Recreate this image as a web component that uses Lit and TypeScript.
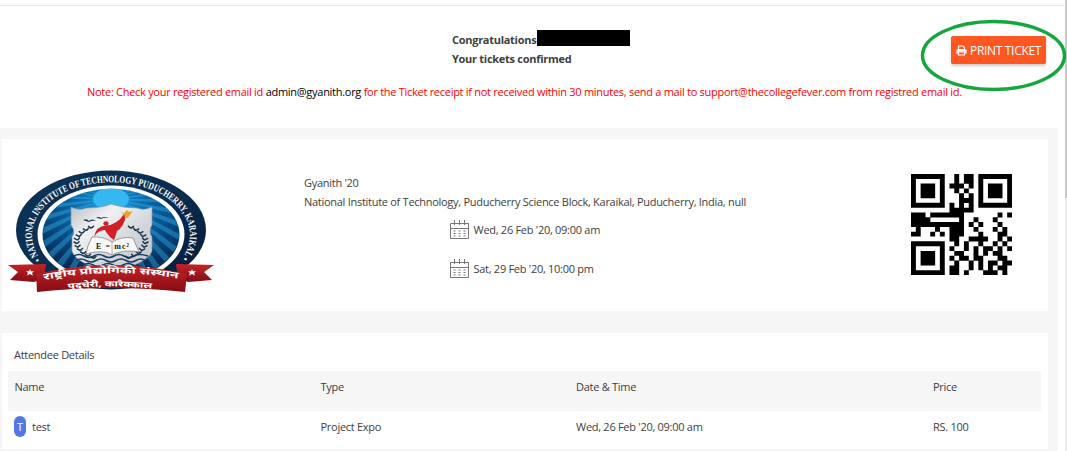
import { LitElement, html, svg, css } from "lit";
import { customElement } from "lit/decorators.js";

const QR_ROWS = [
  "111111100101101111111",
  "100000100101101000001",
  "101110101110101011101",
  "101110100101001011101",
  "101110100010101011101",
  "100000100011101000001",
  "111111101010101111111",
  "000000001111100000000",
  "111011111110000000101",
  "111100000010010001000",
  "111111111110101000100",
  "010001001110010001010",
  "110010101110001000110",
  "000000001100111100101",
  "111111100101001001010",
  "100000101001010110101",
  "101110100110010101100",
  "101110101011011000110",
  "101110100100101011011",
  "100000101100101010110",
  "111111101101000111010",
];

@customElement("emblem-logo")
class EmblemLogo extends LitElement {
  static styles = css`
    :host { display: block; }
    svg { display: block; }
    .ring { font: bold 10px "Liberation Serif", serif; fill: #fff; letter-spacing: 0; }
    .hindi { font: bold 9px "Noto Sans Devanagari", "Lohit Devanagari", "Noto Sans", sans-serif; fill: #fff; letter-spacing: 0; }
    .small { font-size: 8px; }
    .formula { font: bold 8px "Liberation Serif", serif; fill: #111; letter-spacing: 0; }
  `;
  render() {
    const rays = Array.from({ length: 40 }, (_, i) => {
      const a = (i * Math.PI) / 20;
      const b = a + 0.075;
      return `M103 29L${103 + 120 * Math.cos(a)} ${29 + 120 * Math.sin(a)}L${103 + 120 * Math.cos(b)} ${29 + 120 * Math.sin(b)}Z`;
    }).join("");
    const leaves = Array.from({ length: 11 }, (_, i) => {
      const t = 2.1 + i * 0.2;
      const x = 103 + 34 * Math.cos(t);
      const y = 73 + 18 * Math.sin(t);
      const m = 206 - x;
      return svg`<path d="M${x} ${y}l-3.5 -2M${x} ${y}l2.5 -2.6M${m} ${y}l3.5 -2M${m} ${y}l-2.5 -2.6"/>`;
    });
    return html`<svg width="208" height="124" viewBox="0 0 208 124">
      <defs>
        <radialGradient id="sky" cx=".5" cy=".2" r=".7">
          <stop offset="0" stop-color="#20a4e8" /><stop offset=".4" stop-color="#0866a4" /><stop offset="1" stop-color="#032c58" />
        </radialGradient>
        <linearGradient id="navy" x1="0" y1="0" x2="1" y2="1">
          <stop offset="0" stop-color="#0c3557" /><stop offset=".5" stop-color="#092d50" /><stop offset="1" stop-color="#061a38" />
        </linearGradient>
        <linearGradient id="red" x1="0" y1="0" x2="0" y2="1">
          <stop offset="0" stop-color="#c42427" /><stop offset="1" stop-color="#850c13" />
        </linearGradient>
        <linearGradient id="silver" x1="0" y1="0" x2="1" y2="1">
          <stop offset="0" stop-color="#b9bdc2" /><stop offset=".3" stop-color="#f0f1f3" /><stop offset=".6" stop-color="#d4d6da" /><stop offset="1" stop-color="#c2c5ca" />
        </linearGradient>
        <clipPath id="disc"><ellipse cx="103" cy="64" rx="68" ry="45.5" /></clipPath>
        <path id="arc" d="M34 91A79 53 0 1 1 172 91" />
        <path id="wave1" d="M36 110Q103 97 173 109" />
        <path id="wave2" d="M60 119Q103 114 146 119" />
      </defs>
      <ellipse cx="103" cy="60" rx="95" ry="59.5" fill="url(#navy)" />
      <ellipse cx="103" cy="64.5" rx="73.5" ry="49" fill="#fff" />
      <ellipse cx="103" cy="64.5" rx="68.5" ry="45.5" fill="url(#sky)" />
      <path d=${rays} fill="#38b4ed" opacity=".4" clip-path="url(#disc)" />
      <ellipse cx="103" cy="29" rx="18" ry="11" fill="#35b7f1" clip-path="url(#disc)" />
      <path d="M63 37Q71 41 78 38Q94 38 103 34Q114 38 129 38Q136 41 144 37V55Q140 61 144 67V81Q140 93 103 103Q67 93 64 81V67Q68 61 63 55Z" fill="url(#silver)" stroke="#8c969e" stroke-width=".7" />
      <path d="M66 86q5-3 10 0t10 0 10 0 10 0 10 0 10 0 14 0M68 90.500q5-3 10 0t10 0 10 0 10 0 10 0 10 0 9 0M75 95q5-3 10 0t10 0 10 0 10 0 10 0 9 0" fill="none" stroke="#173e64" stroke-width="1.7" />
      <g stroke="#20384d" stroke-width="1.5" fill="none">${leaves}</g>
      <path d="M75 50q4-2 6 1q3-3 7 0q-4-1-7 1q-3-1-6-2M88 48q3-2 5 0q3-2 8 0q-5-1-8 1q-2-1-5-1" fill="#24323c" />
      <path d="M78 84Q79 76 84 67Q95 66 104 72Q114 66 125 68L131 82Q115 79 104 85Q95 79 78 84Z" fill="#f8f8f8" stroke="#777" stroke-width=".7" />
      <path d="M104 72V85" stroke="#999" stroke-width=".7" />
      <path d="M86 67Q88 56 98 55.500Q109 55 116 44L118 45Q116 57 109 61Q107 68 106 70L102 67L98 62L97 60Q90 60 86 67Z" fill="#cf2028" />
      <ellipse cx="98" cy="53.500" rx="2.600" ry="2.200" fill="#cf2028" />
      <path d="M112 42l4 1 3-3 2 2 4-1-3 4-2 3h-3l-1-4z" fill="#eba52a" />
      <text class="formula" x="88" y="79" textLength="33">E = mc²</text>
      <path d="M0 95L38 94L36 108L26 112L2 110L10 102Z" fill="url(#red)" />
      <path d="M206 95L168 94L170 108L180 112L204 110L196 102Z" fill="url(#red)" />
      <path d="M25 108L38 109V115ZM181 108L168 109V115Z" fill="#500810" />
      <path d="M28 104Q66 95 103 95T179 104L177 122Q103 114 29 122Z" fill="url(#red)" />
      <path d="M22 99l1 2.300h3l-2 1.600 1 2.500-3-1.500-3 1.500 1-2.500-2-1.600h3zM184 99l1 2.300h3l-2 1.600 1 2.500-3-1.500-3 1.500 1-2.500-2-1.600h3z" fill="#fff" />
      <text class="ring"><textPath href="#arc" startOffset="2" textLength="260" lengthAdjust="spacingAndGlyphs">• NATIONAL INSTITUTE OF TECHNOLOGY PUDUCHERRY, KARAIKAL •</textPath></text>
      <text class="hindi"><textPath href="#wave1" textLength="135" lengthAdjust="spacingAndGlyphs">राष्ट्रीय प्रौद्योगिकी संस्थान</textPath></text>
      <text class="hindi small"><textPath href="#wave2" textLength="84" lengthAdjust="spacingAndGlyphs">पुदुचेरी, कारैक्काल</textPath></text>
    </svg>`;
  }
}

@customElement("qr-code")
class QrCode extends LitElement {
  static styles = css`:host { display: block; } svg { display: block; }`;
  render() {
    const d = QR_ROWS.map((row, y) =>
      [...row].map((v, x) => (v === "1" ? `M${x} ${y}h1.02v1.02h-1.02z` : "")).join("")
    ).join("");
    return html`<svg width="101" height="101" viewBox="0 0 21 21"><path d=${d} /></svg>`;
  }
}

@customElement("app-root")
class AppRoot extends LitElement {
  static styles = css`
    :host { display: block; width: 1067px; height: 451px; overflow: hidden; position: relative; background: #fff; color: #3e3e3e; font: 11px/19px "Open Sans", sans-serif; letter-spacing: -0.28px; }
    * { box-sizing: border-box; }
    .page { width: 1058px; }
    .head { height: 128px; padding-top: 5px; display: grid; grid-template-columns: 452px 499px 107px; grid-template-rows: 77px 19px; }
    .rule { border-top: 1px solid #e8e8e8; margin-right: -6px; grid-column: 1 / -1; grid-row: 1; height: 1px; }
    .congrats { grid-column: 2; grid-row: 1; padding-top: 25px; font-weight: 700; }
    .line { display: flex; height: 19px; }
    .redacted { width: 93px; height: 16px; background: #000; margin: 0 0 0 1px; }
    .action { grid-column: 3; grid-row: 1; padding-top: 31px; }
    .print { display: flex; align-items: center; width: 95px; height: 28px; padding: 1px 0 0 5px; border: 0; border-radius: 2px; background: #ff5722; color: #fff; font: 12px/27px "Open Sans", sans-serif; letter-spacing: -0.32px; gap: 3px; white-space: nowrap; box-shadow: 0 2px 3px #0003; }
    .note { grid-column: 1 / -1; grid-row: 2; padding-left: 87px; color: #f00; white-space: nowrap; }
    .note b { color: #000; font-weight: 400; }
    .body { height: 323px; background: #f6f6f6; padding: 11px 10px 2px 2px; display: flex; flex-direction: column; gap: 22px; }
    .card { background: #fff; }
    .event { height: 172px; display: grid; grid-template-columns: 302px 607px 1fr; }
    .logo { padding: 31px 0 0 6px; }
    .info { padding-top: 34px; }
    .dates { display: flex; flex-direction: column; gap: 20px; padding: 9px 0 0 145.5px; }
    .date { display: flex; gap: 5px; height: 19px; }
    .code { padding-top: 35px; }
    .attendees { height: 116px; padding: 12px 7px 0 6px; }
    .title { padding-left: 6px; height: 26px; }
    .row { display: grid; grid-template-columns: 306px 255.5px 357px 1fr; padding: 6px 0 0 6.5px; height: 40px; }
    .labels { background: #f6f6f6; }
    .name { display: flex; gap: 6px; }
    .badge { width: 12px; height: 21px; border-radius: 6px; background: #5178e4; color: #fff; text-align: center; line-height: 21px; margin: -1px 0 0 -0.5px; }
    .scroll { position: absolute; right: 0; top: 0; width: 2px; height: 451px; background: #ececec; }
    .thumb { height: 198px; background: #c9c9c9; }
    .mark { position: absolute; left: 918px; top: 16px; }
  `;

  calendar() {
    return html`<svg width="19" height="20" viewBox="0 0 19 20" fill="none" stroke="#777">
      <path d="M.5 3.5h18v15H.5zM.5 8.500h18" /><path d="M4.500 0v5M9.500 0v5M14.500 0v5" />
      <path d="M3.500 11h12M3.500 13.500h12M3.500 16h12" stroke-dasharray="2 3" stroke="#777" />
    </svg>`;
  }

  render() {
    return html`
      <div class="page">
        <header class="head">
          <div class="rule"></div>
          <div class="congrats">
            <div class="line">Congratulations<span class="redacted"></span></div>
            <div class="line">Your tickets confirmed</div>
          </div>
          <div class="action"><button class="print">
            <svg width="11" height="11" viewBox="0 0 22 22" fill="none" stroke="#fff" stroke-width="2.4">
              <path d="M5 10V2h9l3 3v5M5 16H2v-5q0-2 2-2h14q2 0 2 2v5h-3M5 14h12v6H5z" /><path d="M3 10h16v3H3z" fill="#fff" stroke="none" />
            </svg>PRINT TICKET</button></div>
          <div class="note">Note: Check your registered email id <b>admin@gyanith.org</b> for the Ticket receipt if not received within 30 minutes, send a mail to support@thecollegefever.com from registred email id.</div>
        </header>
        <main class="body">
          <section class="card event">
            <emblem-logo class="logo"></emblem-logo>
            <div class="info">
              <div>Gyanith '20</div>
              <div>National Institute of Technology, Puducherry Science Block, Karaikal, Puducherry, India, null</div>
              <div class="dates">
                <div class="date">${this.calendar()}<span>Wed, 26 Feb '20, 09:00 am</span></div>
                <div class="date">${this.calendar()}<span>Sat, 29 Feb '20, 10:00 pm</span></div>
              </div>
            </div>
            <qr-code class="code"></qr-code>
          </section>
          <section class="card attendees">
            <div class="title">Attendee Details</div>
            <div class="row labels"><span>Name</span><span>Type</span><span>Date &amp; Time</span><span>Price</span></div>
            <div class="row"><span class="name"><span class="badge">T</span>test</span><span>Project Expo</span><span>Wed, 26 Feb '20, 09:00 am</span><span>RS. 100</span></div>
          </section>
        </main>
      </div>
      <div class="scroll"><div class="thumb"></div></div>
      <svg class="mark" width="149" height="78" viewBox="0 0 149 78" fill="none"><ellipse cx="75.5" cy="39.500" rx="71" ry="34" stroke="#16a63e" stroke-width="3.500" /></svg>
    `;
  }
}
